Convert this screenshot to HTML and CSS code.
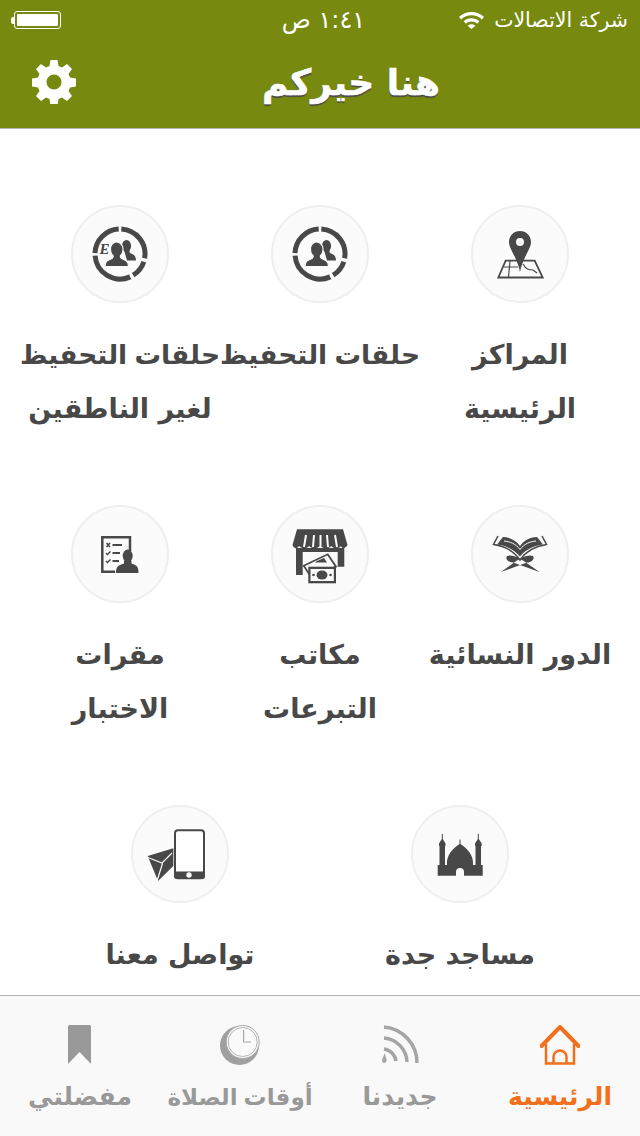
FILE: index.html
```html
<!DOCTYPE html>
<html lang="ar">
<head>
<meta charset="utf-8">
<title>هنا خيركم</title>
<link rel="stylesheet" href="styles.css">
</head>
<body>
<svg class="defs" width="0" height="0" aria-hidden="true">
  <symbol id="ring" viewBox="0 0 98 98">
    <g fill="none" stroke="#484848" stroke-width="5">
      <path d="M50.3 24A25 25 0 0 1 73.6 53.3"/>
      <path d="M72.8 56.7A25 25 0 0 1 62.2 70.2"/>
      <path d="M59.2 71.9A25 25 0 0 1 24.1 50.7"/>
      <path d="M24 48.1A25 25 0 0 1 47.7 24"/>
    </g>
    <g fill="#484848">
      <ellipse cx="55.5" cy="41" rx="4.6" ry="6"/>
      <path d="M53 45h5l1 3c4 1.500 6 3 6 7.500h-9z"/>
      <path d="M34 61.500c0-5 2-6 7-8 1-.6 1.500-1.500 1-3-1.500-1-2.500-3.500-2.500-6.500 0-4 2.500-7 6-7s6.500 3 6.500 7c0 3-1 5.500-2.500 6.500-.5 1.500 0 2.400 1 3 5 2 7 3 7 8z" stroke="#fbfbfb" stroke-width="1.200"/>
    </g>
  </symbol>
</svg>

<header class="top">
  <div class="status">
    <div class="battery"><span class="battery-nub"></span><span class="battery-body"><span class="battery-fill"></span></span></div>
    <div class="time" dir="rtl">١:٤١ ص</div>
    <div class="signal">
      <svg class="wifi" viewBox="0 0 25 17"><path fill="#fff" d="M12.500 0C7.800 0 3.500 1.800 0 5l2.200 2.400C5 4.800 8.600 3.300 12.500 3.300S20 4.800 22.800 7.400L25 5C21.500 1.800 17.200 0 12.500 0zM12.500 6.200c-3 0-5.700 1.100-7.900 3.100l2.300 2.400c1.500-1.400 3.500-2.200 5.600-2.200s4.100.8 5.600 2.200l2.300-2.400c-2.200-2-4.900-3.100-7.900-3.100zM12.500 12.200c-1.500 0-2.900.6-4 1.500l4 3.300 4-3.300c-1.100-.9-2.500-1.500-4-1.500z"/></svg>
      <span class="carrier" dir="rtl">شركة الاتصالات</span>
    </div>
  </div>
  <div class="nav">
    <svg class="gear" viewBox="0 0 44 44"><path fill="#fff" fill-rule="evenodd" d="M18.500 0h7l1 6 3.500 1.500 5-3.500 5 5-3.500 5 1.500 3.500 6 1v8l-6 1-1.500 3.500 3.500 5-5 5-5-3.500-3.500 1.500-1 6h-7l-1-6-3.500-1.500-5 3.500-5-5 3.500-5-1.500-3.500-6-1v-8l6-1 1.500-3.500-3.500-5 5-5 5 3.500 3.500-1.500zM22 14.500a7.500 7.500 0 1 0 .01 0z"/></svg>
    <h1 class="title" dir="rtl">هنا خيركم</h1>
  </div>
</header>

<main class="menu">
  <div class="row" dir="rtl">
    <a class="item">
      <svg class="circle" viewBox="0 0 98 98"><circle class="disc" cx="49" cy="49" r="48"/>
        <g fill="none" stroke="#484848" stroke-width="1.200"><path d="M34.700 55.700H63.700L71.700 72.500H27.300z" stroke-width="1.800"/><path d="M39 56 37.500 72M33 62H47M52 59c3 6 7 6 10 6l4 3"/></g>
        <path fill="#484848" fill-rule="evenodd" d="M49 26c-6.200 0-11 4.800-11 11 0 7 7.500 14 11 29.700C52.500 51 60 44 60 37c0-6.200-4.800-11-11-11zM49 33a4 4 0 1 1 0 8 4 4 0 0 1 0-8z"/>
      </svg>
      <span class="label">المراكز<br>الرئيسية</span>
    </a>
    <a class="item">
      <svg class="circle" viewBox="0 0 98 98"><circle class="disc" cx="49" cy="49" r="48"/><use href="#ring" width="98" height="98"/></svg>
      <span class="label"><span class="tight">حلقات التحفيظ</span></span>
    </a>
    <a class="item">
      <svg class="circle" viewBox="0 0 98 98"><circle class="disc" cx="49" cy="49" r="48"/><use href="#ring" width="98" height="98"/>
        <text class="e-mark" x="28.500" y="49">E</text></svg>
      <span class="label"><span class="tight">حلقات التحفيظ</span><br>لغير الناطقين</span>
    </a>
  </div>
  <div class="row" dir="rtl">
    <a class="item">
      <svg class="circle" viewBox="0 0 98 98"><circle class="disc" cx="49" cy="49" r="48"/>
        <path fill="none" stroke="#484848" stroke-width="1.500" d="M27 31 22.500 39.500C33 41 43 46 49 55 55 46 65 41 75.500 39.500L71 31"/>
        <path fill="#484848" d="M32 32C38 32 45 35 49 41 53 35 60 32 66 32L72 39.500C64 40.500 55 44 49 51.500 43 44 34 40.500 26 39.500z"/>
        <path fill="none" stroke="#fbfbfb" d="M33 36C39 36.500 45 39 49 44.500 53 39 59 36.500 65 36"/>
        <path fill="#484848" d="M62 51C64 54 61 57 56 57.500L30 67 46 55.500C50 53 57 49 62 51zM36 51C34 54 37 57 42 57.500L68.500 67 52 55.500C48 53 41 49 36 51z"/>
      </svg>
      <span class="label">الدور النسائية</span>
    </a>
    <a class="item">
      <svg class="circle" viewBox="0 0 98 98"><circle class="disc" cx="49" cy="49" r="48"/>
        <path fill="#484848" d="M26 24.300H72L76.500 40C74 44 71 44 70 41 68 44 63 44 60 41 58 44 53 44 49 41 46 44 41 44 38 41 36 44 31 44 28 41 26 44 23 44 21.500 40z"/>
        <path fill="none" stroke="#fbfbfb" stroke-width="2" d="M35 30 33 42M43 30 42 42M49.500 30V42M56 30 57 42M64 30 66 42"/>
        <path fill="#484848" d="M25 43H31.700V70H25zM66.700 43H73.300V61.700H66.700zM31 43H67V47H31z"/>
        <path fill="#fbfbfb" stroke="#484848" stroke-width="1.800" d="M32.700 60.700 56.700 49.300 65 61.700 40 72z"/>
        <path fill="#484848" d="M46 56l7-3 3 4.500H44z"/>
        <rect x="37.300" y="61.700" width="27.700" height="16.600" fill="#484848"/>
        <rect x="39.500" y="64" width="23.300" height="12" fill="#fbfbfb"/>
        <ellipse cx="51" cy="70" rx="5.500" ry="4.500" fill="#484848"/>
        <circle cx="42.500" cy="70" r="1.300" fill="#484848"/><circle cx="59.500" cy="70" r="1.300" fill="#484848"/>
      </svg>
      <span class="label">مكاتب<br>التبرعات</span>
    </a>
    <a class="item">
      <svg class="circle" viewBox="0 0 98 98"><circle class="disc" cx="49" cy="49" r="48"/>
        <path fill="none" stroke="#484848" stroke-width="2.500" d="M44 66.800H31.300V32.200H59V46"/>
        <path fill="none" stroke="#484848" stroke-width="1.500" d="M35.500 38 39 42M39 38 35.500 42M35 48l1.500 1.500 3-3M35 56l1.500 1.500 3-3"/>
        <path fill="none" stroke="#484848" stroke-width="2" d="M41.500 40H51M41.500 48H49M41.500 56H48"/>
        <ellipse cx="56.700" cy="51" rx="5" ry="6.500" fill="#484848"/>
        <path fill="#484848" d="M45 68c0-6 1.500-7.500 8-9.500V56h7.500v2.500c6 2 7 3.500 7 9.500z"/>
      </svg>
      <span class="label">مقرات<br>الاختبار</span>
    </a>
  </div>
  <div class="row row-wide" dir="rtl">
    <a class="item">
      <svg class="circle" viewBox="0 0 98 98"><circle class="disc" cx="49" cy="49" r="48"/>
        <path fill="#484848" fill-rule="evenodd" d="M26.700 60H36C35 50 42 43.500 48.500 39V34.500H49.500V39C56 43.500 63 50 62 60H71.700V70.700H26.700zM45 70.700H53V67A4 4 0 0 0 45 67z"/>
        <path fill="#484848" d="M28.500 60V41H28V38.500L30.800 34V29H31.800V34L34.500 38.500V41H34V60zM64.500 60V41H64V38.500L66.800 34V29H67.800V34L70.700 38.500V41H70V60z"/>
      </svg>
      <span class="label">مساجد جدة</span>
    </a>
    <a class="item">
      <svg class="circle" viewBox="0 0 98 98"><circle class="disc" cx="49" cy="49" r="48"/>
        <rect x="44" y="25.300" width="29" height="48" rx="3" fill="#fff" stroke="#484848" stroke-width="2"/>
        <path fill="#484848" d="M43 66.500H74V71A3 3 0 0 1 71 74H46A3 3 0 0 1 43 71z"/>
        <circle cx="58" cy="70" r="2.700" fill="#fff"/>
        <path fill="#484848" d="M16.700 51 42.300 43.300V61L27 76z"/>
        <path fill="none" stroke="#fbfbfb" stroke-width="1.200" d="M17 52.500 31 58 41 48M26 76 31.500 58.500"/>
      </svg>
      <span class="label">تواصل معنا</span>
    </a>
  </div>
</main>

<nav class="tabs" dir="rtl">
  <a class="tab tab-active">
    <svg class="tab-icon" viewBox="0 0 40 40" fill="none" stroke="#f26f1c" stroke-width="2.500"><path d="M1.500 21 20 2 38.500 21" stroke-width="4" stroke-linecap="round" stroke-linejoin="round"/><path d="M6 19V38.500H34V19"/><path d="M13.500 38.500V32A6.500 6.500 0 0 1 26.500 32V38.500"/></svg>
    <span class="tab-label">الرئيسية</span>
  </a>
  <a class="tab">
    <svg class="tab-icon" viewBox="0 0 40 40" fill="none" stroke="#a5a5a5" stroke-width="3.500"><path d="M4 2A36 36 0 0 1 37 38"/><path d="M4 13A25 25 0 0 1 27 37"/><path d="M4 24A14 14 0 0 1 16 36"/><path fill="#a5a5a5" stroke="none" d="M4.500 28C5 31 7 33 6.500 36 6 38.500 2.500 38.500 2 36 2 33 4 31.500 4.500 28z"/></svg>
    <span class="tab-label">جديدنا</span>
  </a>
  <a class="tab">
    <svg class="tab-icon" viewBox="0 0 40 40"><circle cx="19.500" cy="20.500" r="19.500" fill="#a0a0a0"/><circle cx="22.700" cy="17" r="16.500" fill="#f9f9f9" stroke="#a8a8a8"/><circle cx="22.700" cy="17" r="14.500" fill="#fafafa" stroke="#b4b4b4"/><path fill="none" stroke="#a8a8a8" stroke-width="1.200" d="M23.600 5V17H31"/></svg>
    <span class="tab-label tight-tab">أوقات الصلاة</span>
  </a>
  <a class="tab">
    <svg class="tab-icon" viewBox="0 0 40 40"><path fill="#999" d="M9.500 0H29.500A1.500 1.500 0 0 1 31 1.500V39L19.500 27 8 39V1.500A1.500 1.500 0 0 1 9.500 0z"/></svg>
    <span class="tab-label">مفضلتي</span>
  </a>
</nav>
</body>
</html>
```
FILE: styles.css
```css
* { box-sizing: border-box; }
html, body { margin: 0; padding: 0; }
body { width: 640px; height: 1136px; font-family: "DejaVu Sans", sans-serif; background: #fff; display: flex; flex-direction: column; overflow: hidden; }
.defs { position: absolute; }
.top { background: #778a0f; color: #fff; border-bottom: 1px solid #b4b4b4; height: 129px; flex: none; }
.status { height: 40px; display: grid; grid-template-columns: 1fr auto 1fr; align-items: center; padding: 0 12px 0 11px; }
.battery { display: flex; align-items: center; width: 50px; }
.battery-nub { width: 3px; height: 7px; background: #fff; border-radius: 2px 0 0 2px; }
.battery-body { flex: 1; height: 18px; border: 1px solid #fff; border-radius: 3px; padding: 2px; display: flex; }
.battery-fill { flex: 1; background: #fff; border-radius: 1px; }
.time { font-size: 24px; margin-left: 8px; }
.signal { display: flex; align-items: center; justify-content: flex-end; gap: 10px; }
.wifi { width: 25px; height: 17px; }
.carrier { font-size: 20.5px; }
.nav { height: 88px; display: flex; align-items: center; padding: 0 0 4px 32px; }
.gear { width: 44px; height: 44px; flex: none; }
.title { margin: 0 0 0 186px; font-size: 36px; font-weight: 700; white-space: nowrap; text-shadow: 0 2px 1px #4a4a4a; -webkit-text-stroke: 0.6px #fff; }
.menu { flex: 1; min-height: 0; padding-top: 76px; }
.row { display: flex; height: 300px; padding: 0 20px; }
.row-wide { padding: 0 40px; height: auto; }
.item { flex: 1 0 0; display: flex; flex-direction: column; align-items: center; min-width: 0; }
.circle { width: 98px; height: 98px; display: block; flex: none; }
.disc { fill: #fbfbfb; stroke: #efefef; stroke-width: 2; }
.e-mark { font: italic 700 15px "Liberation Serif", serif; fill: #484848; direction: ltr; }
.label { margin-top: 25px; font-size: 27px; font-weight: 700; color: #484848; line-height: 54px; text-align: center; white-space: nowrap; }
.tight { font-size: 26.5px; word-spacing: -2px; }
.tabs { height: 141px; flex: none; background: #f9f9f9; border-top: 1px solid #b0b0b0; display: flex; padding-top: 29px; }
.tab { flex: 1 0 0; display: flex; flex-direction: column; align-items: center; color: #999; }
.tab-active { color: #f26f1c; }
.tab-icon { width: 40px; height: 40px; flex: none; }
.tab-label { margin-top: 13px; font-size: 25px; font-weight: 700; line-height: 38px; white-space: nowrap; }
.tight-tab { font-size: 23px; word-spacing: -2px; }
```
